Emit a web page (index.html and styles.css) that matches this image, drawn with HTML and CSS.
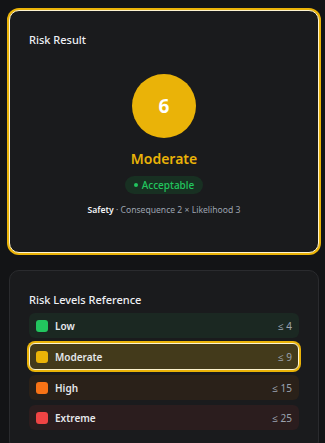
FILE: index.html
```html
<!DOCTYPE html>
<html lang="en">
<head>
    <meta charset="UTF-8">
    <meta name="viewport" content="width=device-width, initial-scale=1.0">
    <title>Risk Result</title>
    <link rel="stylesheet" href="styles.css">
</head>
<body>
    <div class="page">
        <div class="card card-active">
            <div class="card-title">Risk Result</div>
            <div class="result">
                <div class="score">6</div>
                <div class="level">Moderate</div>
                <div class="pill"><span class="dot"></span>Acceptable</div>
                <div class="info"><b>Safety</b> · Consequence 2 × Likelihood 3</div>
            </div>
        </div>

        <div class="card">
            <div class="card-title">Risk Levels Reference</div>
            <div class="levels">
                <div class="row row-low">
                    <span class="swatch swatch-low"></span>
                    <span class="row-name">Low</span>
                    <span class="row-max">≤ 4</span>
                </div>
                <div class="row row-moderate row-current">
                    <span class="swatch swatch-moderate"></span>
                    <span class="row-name">Moderate</span>
                    <span class="row-max">≤ 9</span>
                </div>
                <div class="row row-high">
                    <span class="swatch swatch-high"></span>
                    <span class="row-name">High</span>
                    <span class="row-max">≤ 15</span>
                </div>
                <div class="row row-extreme">
                    <span class="swatch swatch-extreme"></span>
                    <span class="row-name">Extreme</span>
                    <span class="row-max">≤ 25</span>
                </div>
            </div>
        </div>
    </div>
</body>
</html>
```

FILE: styles.css
```css
body {
    margin: 0;
    background-color: #131416;
    font-family: "Noto Sans", "Open Sans", Arial, sans-serif;
    color: #e5e7eb;
}
.page {
    padding: 10px 6px 0 9px;
}
.card {
    background-color: #1a1b1d;
    border: 1px solid #2a2b2e;
    border-radius: 10px;
    padding: 21px 19px 20px 19px;
    margin-bottom: 17px;
}
.card-active {
    border-color: #fdf4d0;
    box-shadow: 0 0 0 2px #eab308;
    padding-bottom: 35px;
}
.card-title {
    font-size: 11px;
    font-weight: 500;
    line-height: 16px;
    color: #eef0f4;
}
.result {
    display: flex;
    flex-direction: column;
    align-items: center;
    margin-top: 26px;
}
.score {
    width: 64px;
    height: 64px;
    border-radius: 50%;
    background-color: #eab308;
    color: #fff;
    font-size: 19px;
    font-weight: 700;
    display: flex;
    align-items: center;
    justify-content: center;
}
.level {
    margin-top: 11px;
    font-size: 14px;
    font-weight: 600;
    color: #eab308;
    line-height: 20px;
}
.pill {
    margin-top: 7px;
    height: 18px;
    padding: 0 9px;
    border-radius: 9px;
    background-color: #183022;
    color: #22c55e;
    font-size: 10px;
    font-weight: 500;
    display: flex;
    align-items: center;
    gap: 4px;
}
.dot {
    width: 4px;
    height: 4px;
    border-radius: 50%;
    background-color: #22c55e;
}
.info {
    margin-top: 9px;
    font-size: 8.6px;
    color: #9ca3af;
    line-height: 14px;
}
.info b {
    color: #f3f4f6;
    font-weight: 600;
}
.levels {
    margin-top: 5px;
    display: flex;
    flex-direction: column;
    gap: 5px;
}
.row {
    height: 25px;
    border-radius: 6px;
    padding: 0 7px;
    display: flex;
    align-items: center;
    gap: 7px;
    font-size: 10px;
}
.row-low { background-color: #1b2822; }
.row-moderate { background-color: #433a1b; }
.row-high { background-color: #2a2119; }
.row-extreme { background-color: #2b1d1e; }
.row-current {
    border: 1px solid #fdf4d0;
    box-shadow: 0 0 0 2px #eab308;
    padding: 0 6px;
}
.swatch {
    width: 12px;
    height: 12px;
    border-radius: 3px;
}
.swatch-low { background-color: #22c55e; }
.swatch-moderate { background-color: #eab308; }
.swatch-high { background-color: #f97316; }
.swatch-extreme { background-color: #ef4444; }
.row-name {
    font-weight: 600;
    color: #e5e7eb;
    flex: 1;
}
.row-max {
    color: #9ca3af;
}
```
